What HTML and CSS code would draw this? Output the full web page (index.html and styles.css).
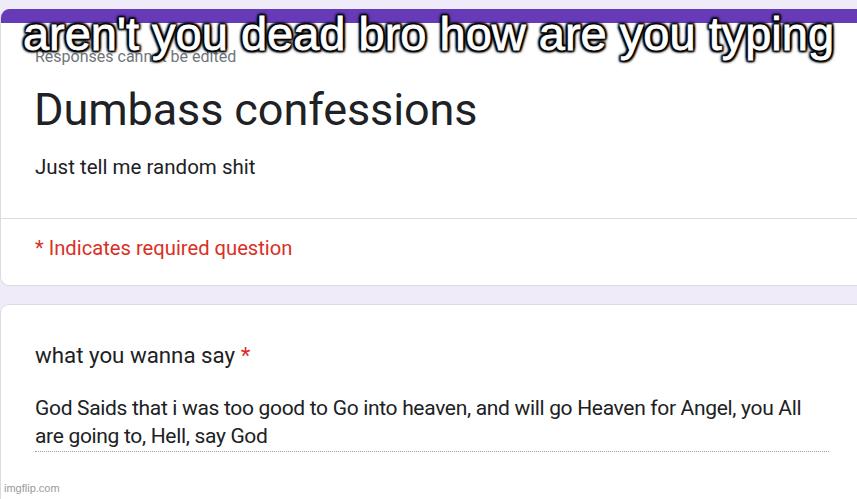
FILE: index.html
```html
<!DOCTYPE html>
<html>
<head>
<meta charset="utf-8">
<link rel="stylesheet" href="styles.css">
</head>
<body>
<div class="page">
  <section class="card card-head">
    <div class="accent"></div>
    <div class="head-main">
      <div class="note">Responses cannot be edited</div>
      <h1 class="title">Dumbass confessions</h1>
      <p class="desc">Just tell me random shit</p>
    </div>
    <div class="head-foot">
      <span class="required">* Indicates required question</span>
    </div>
  </section>
  <section class="card card-q">
    <div class="question">what you wanna say <span class="star">*</span></div>
    <div class="answer">God Saids that i was too good to Go into heaven, and will go Heaven for Angel, you All are going to, Hell, say God</div>
  </section>
</div>
<div class="caption">aren't you dead bro how are you typing</div>
<div class="watermark">imgflip.com</div>
</body>
</html>
```

FILE: styles.css
```css
html, body {
  margin: 0;
  padding: 0;
}
body {
  background: #f0ebf8;
  width: 857px;
  height: 499px;
  overflow: hidden;
  position: relative;
  font-family: Roboto, "Noto Sans", Arial, sans-serif;
  color: #202124;
}
.page {
  padding-top: 9px;
  display: flex;
  flex-direction: column;
  gap: 18px;
}
.card {
  background: #fff;
  border: 1px solid #dadce0;
  border-right: none;
  border-radius: 9px 0 0 9px;
  margin-right: -10px;
}
.card-head {
  border-top: none;
  overflow: hidden;
}
.accent {
  height: 14px;
  background: #673ab7;
}
.head-main {
  padding: 24px 0 0 34px;
  height: 171px;
  border-bottom: 1px solid #dadce0;
}
.note {
  font-size: 16px;
  color: #70757a;
  line-height: 20px;
}
.title {
  margin: 15px 0 0 -1px;
  font-size: 45px;
  font-weight: 400;
  line-height: 56px;
  letter-spacing: -0.1px;
  color: #202124;
}
.desc {
  margin: 16px 0 0 0;
  font-size: 20.5px;
  line-height: 26px;
  color: #202124;
}
.head-foot {
  padding: 15px 0 0 34px;
  height: 51px;
}
.required {
  font-size: 20.2px;
  color: #d93025;
  line-height: 28px;
}
.card-q {
  padding: 36px 0 60px 34px;
}
.question {
  font-size: 22.3px;
  line-height: 28px;
  color: #202124;
}
.star {
  color: #d93025;
}
.answer {
  margin-top: 25px;
  width: 794px;
  font-size: 21px;
  line-height: 28px;
  letter-spacing: -0.32px;
  color: #202124;
  padding-bottom: 1px;
  border-bottom: 1px dotted #9aa0a6;
}
.caption {
  position: absolute;
  left: 0;
  top: 10px;
  width: 857px;
  text-align: center;
  font-family: "Liberation Sans", Arial, sans-serif;
  font-size: 47px;
  line-height: 48px;
  color: #fff;
  -webkit-text-stroke: 0.8px #fff;
  text-shadow:
    2px 2px 2px #000, -2px -2px 2px #000, 2px -2px 2px #000, -2px 2px 2px #000,
    0 2px 2px #000, 0 -2px 2px #000, 2px 0 2px #000, -2px 0 2px #000,
    0 0 5px #000;
}
.watermark {
  position: absolute;
  left: 4px;
  bottom: 5px;
  font-family: "Liberation Sans", Arial, sans-serif;
  font-size: 11px;
  color: #9a9a9a;
}
```
